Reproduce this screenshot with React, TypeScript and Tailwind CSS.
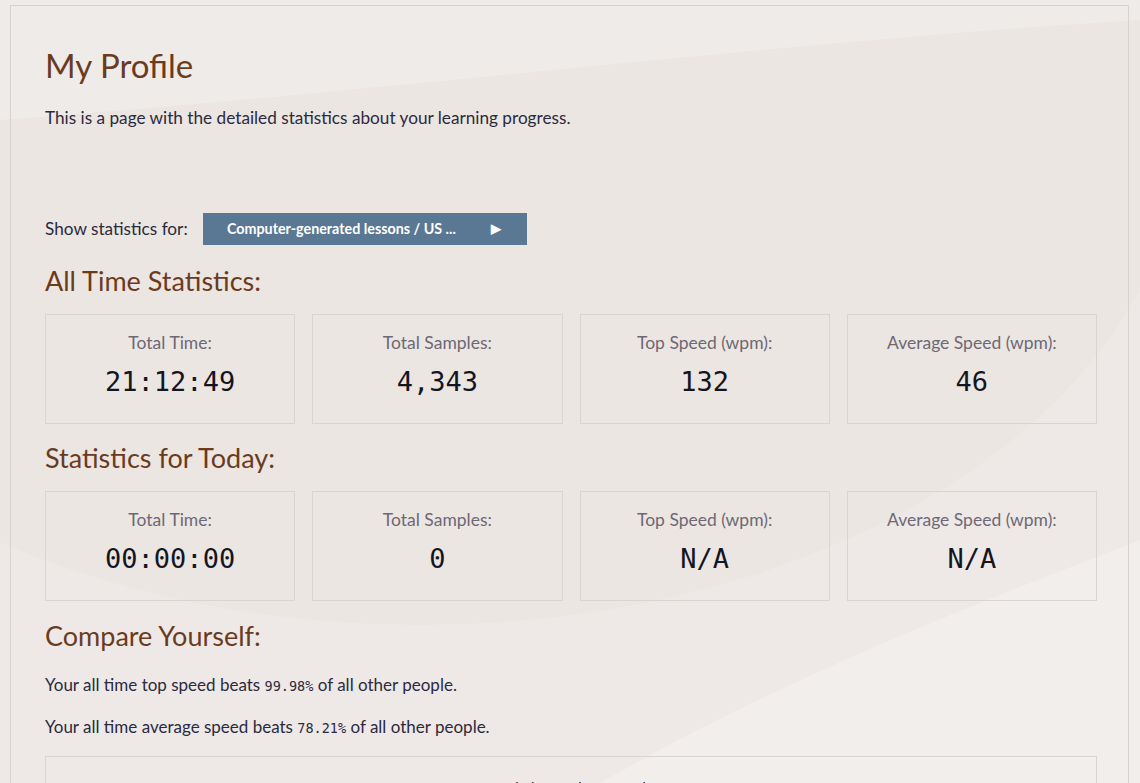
const stats = {
  allTime: [
    { label: "Total Time:", value: "21:12:49" },
    { label: "Total Samples:", value: "4,343" },
    { label: "Top Speed (wpm):", value: "132" },
    { label: "Average Speed (wpm):", value: "46" },
  ],
  today: [
    { label: "Total Time:", value: "00:00:00" },
    { label: "Total Samples:", value: "0" },
    { label: "Top Speed (wpm):", value: "N/A" },
    { label: "Average Speed (wpm):", value: "N/A" },
  ],
};

const sans = "font-['Lato','Noto_Sans',sans-serif]";
const mono = "font-['DejaVu_Sans_Mono',monospace]";

function StatCard({ label, value }: { label: string; value: string }) {
  return (
    <div className="h-[110px] border border-[#d9d4d1] flex flex-col items-center pt-[18px]">
      <p className="text-[17.5px] leading-[20px] text-[#6e6876]">{label}</p>
      <p className={`${mono} mt-[13px] text-[27px] leading-[32px] text-[#15151f]`}>{value}</p>
    </div>
  );
}

function Heading({ children, className = "" }: { children: React.ReactNode; className?: string }) {
  return <h2 className={`text-[27px] leading-[32px] text-[#6b3b1e] ${className}`}>{children}</h2>;
}

function Backdrop() {
  // soft wave shapes behind the page
  return (
    <svg className="absolute inset-0 w-full h-full pointer-events-none" viewBox="0 0 1140 783" preserveAspectRatio="none">
      <rect width="1140" height="783" fill="#f1edeb" />
      <path d="M0 100 C 300 60, 700 20, 1140 0 L1140 783 L0 783 Z" fill="#eee9e6" />
      <ellipse cx="420" cy="130" rx="760" ry="495" fill="#ebe6e2" />
      <path d="M600 783 C 780 680, 960 610, 1140 540 L1140 783 Z" fill="#f1eeec" />
      <path d="M0 120 C 400 90, 800 40, 1140 20 L1140 0 L0 0 Z" fill="#efebe8" />
    </svg>
  );
}

export default function App() {
  return (
    <div className={`${sans} relative w-[1140px] h-[783px] overflow-hidden`}>
      <Backdrop />
      <div className="relative ml-[10px] mt-[5px] w-[1119px] h-[800px] border-t border-l border-r border-[#d8d2cf] pl-[34px] pr-[31px] pt-[39px]">
        <h1 className="text-[33px] leading-[40px] text-[#6b3b1e]">My Profile</h1>
        <p className="mt-[21px] text-[17.2px] leading-[24px] text-[#2b2a3f]">
          This is a page with the detailed statistics about your learning progress.
        </p>

        <div className="mt-[83px] flex items-center h-[32px]">
          <span className="w-[158px] text-[17.2px] text-[#2b2a3f]">Show statistics for:</span>
          <button
            type="button"
            className="w-[324px] h-[32px] bg-[#5a7894] text-white text-[14.3px] font-bold flex items-center pl-[24px] pr-[26px]"
          >
            <span className="flex-1 text-left">Computer-generated lessons / US ...</span>
            <span className="text-[13px]">▶</span>
          </button>
        </div>

        <Heading className="mt-[20px]">All Time Statistics:</Heading>
        <div className="mt-[17px] grid grid-cols-4 gap-x-[17px]">
          {stats.allTime.map((s) => (
            <StatCard key={s.label} {...s} />
          ))}
        </div>

        <Heading className="mt-[18px]">Statistics for Today:</Heading>
        <div className="mt-[17px] grid grid-cols-4 gap-x-[17px]">
          {stats.today.map((s) => (
            <StatCard key={s.label} {...s} />
          ))}
        </div>

        <Heading className="mt-[19px]">Compare Yourself:</Heading>
        <p className="mt-[21px] text-[17px] leading-[24px] text-[#2b2a3f]">
          Your all time top speed beats <span className={`${mono} text-[13.5px]`}>99.98%</span> of all other people.
        </p>
        <p className="mt-[17px] text-[17px] leading-[24px] text-[#2b2a3f]">
          Your all time average speed beats <span className={`${mono} text-[13.5px]`}>78.21%</span> of all other people.
        </p>

        <div className="mt-[16px] h-[200px] border border-[#d9d4d1] flex justify-center pt-[20px]">
          <span className="text-[15px] text-[#222] font-['Liberation_Sans',sans-serif]">Relative Typing Speed</span>
        </div>
      </div>
    </div>
  );
}
